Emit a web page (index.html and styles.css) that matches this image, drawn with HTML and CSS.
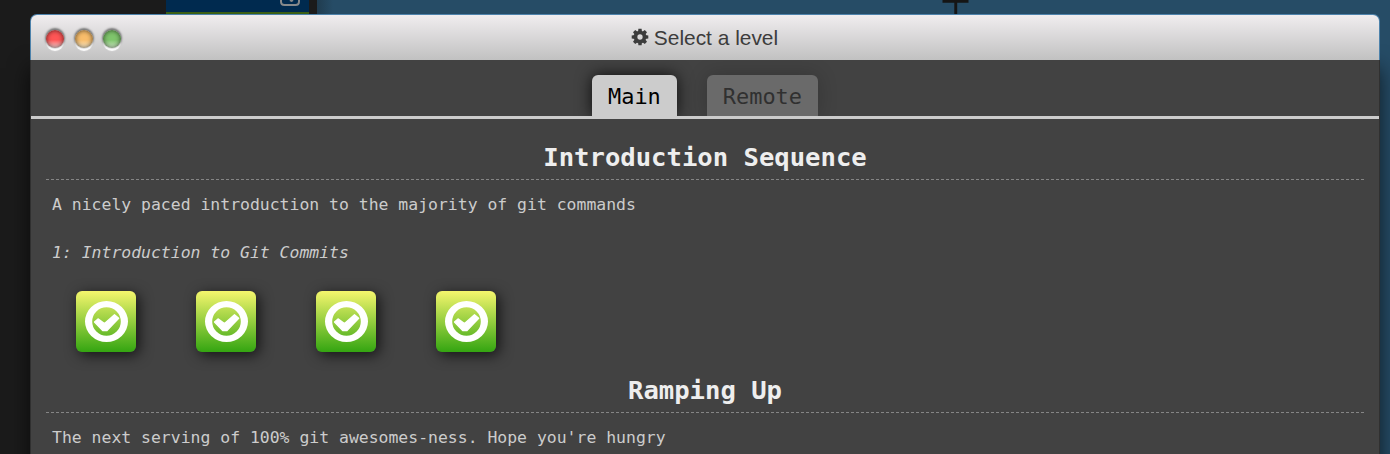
FILE: index.html
```html
<!DOCTYPE html>
<html lang="en">
<head>
<meta charset="utf-8">
<title>Select a level</title>
<link rel="stylesheet" href="styles.css">
</head>
<body>
<div class="backdrop">
  <div class="sidebar"><div class="terminal"><svg class="terminal-icon" width="22" height="8" viewBox="0 0 22 8"><path d="M2 0V1.500Q2 5 5.500 5H16.500Q20 5 20 1.500V0M11 0L12.500 .8L14 0" fill="none" stroke="#87898b" stroke-width="2"/></svg></div></div>
  <div class="canvas"><svg class="commit" width="28" height="14" viewBox="0 0 28 14"><path d="M.5 0H26.500V2.700H.5ZM12.300 2.500H15.200V14H12.300Z" fill="#151515"/></svg></div>
</div>
<main class="window">
  <header class="titlebar">
    <div class="lights"><i class="light red"></i><i class="light amber"></i><i class="light green"></i></div>
    <h1 class="title"><svg class="gear" width="18" height="18" viewBox="-9 -9 18 18"><g fill="#3c3c3c"><path id="tooth" d="M-2-5H2L1.600-8.300H-1.600Z"/><use href="#tooth" transform="rotate(45)"/><use href="#tooth" transform="rotate(90)"/><use href="#tooth" transform="rotate(135)"/><use href="#tooth" transform="rotate(180)"/><use href="#tooth" transform="rotate(225)"/><use href="#tooth" transform="rotate(270)"/><use href="#tooth" transform="rotate(315)"/></g><circle r="4.500" fill="none" stroke="#3c3c3c" stroke-width="3.700"/></svg><span>Select a level</span></h1>
  </header>
  <div class="content">
    <nav class="tabs"><div class="tab active">Main</div><div class="tab">Remote</div></nav>
    <section class="sequence">
      <h2>Introduction Sequence</h2>
      <p>A nicely paced introduction to the majority of git commands</p>
      <p class="level-name">1: Introduction to Git Commits</p>
      <div class="levels">
        <div class="level"><svg viewBox="0 0 60 61"><path id="ring" fill="#fff" fill-rule="evenodd" d="M9 30.500a21.500 20.500 0 1 0 43 0a21.500 20.500 0 1 0-43 0ZM16.200 30.500a14.300 14.300 0 1 1 28.600 0a14.300 14.300 0 1 1-28.600 0Z"/><path id="tick" d="M18.500 31L22 27.900L28.500 32.600L38.500 23.700L42.700 27.300L31 39.500H26.700Z" fill="#fff" stroke="#fff" stroke-width="1.300" stroke-linejoin="round"/></svg></div>
        <div class="level"><svg viewBox="0 0 60 61"><use href="#ring"/><use href="#tick"/></svg></div>
        <div class="level"><svg viewBox="0 0 60 61"><use href="#ring"/><use href="#tick"/></svg></div>
        <div class="level"><svg viewBox="0 0 60 61"><use href="#ring"/><use href="#tick"/></svg></div>
      </div>
    </section>
    <section class="sequence">
      <h2>Ramping Up</h2>
      <p>The next serving of 100% git awesomes-ness. Hope you're hungry</p>
    </section>
  </div>
</main>
</body>
</html>
```
FILE: styles.css
```css
* { box-sizing: border-box; }
html, body { margin: 0; height: 454px; overflow: hidden; }
body { position: relative; background: #264c66; }
.backdrop { display: flex; height: 454px; }
.sidebar { width: 317px; background: #1b1b1b; padding-left: 166px; }
.terminal { display: flex; justify-content: flex-end; width: 143px; height: 14px; background: #002a4f; border-bottom: 2px solid #3b6014; padding-right: 8px; }
.canvas { flex: 1; background: linear-gradient(90deg, #203c4f, #264c66 16px); padding-left: 625px; }
.commit, .terminal-icon { display: block; }
.window { position: absolute; left: 30px; top: 14px; width: 1350px; height: 460px; }
.titlebar { display: flex; position: relative; z-index: 2; height: 46px; border: 1px solid #4d82ab; border-bottom: 0; border-radius: 7px 7px 0 0; background: linear-gradient(#f0edef, #c1c1c1); }
.lights { display: flex; gap: 10.700px; width: 120px; padding: 15px 0 0 15px; }
.light { width: 18px; height: 18px; border-radius: 50%; box-shadow: 0 -1px 2px 1px #777, 0 3px 1px #fff, inset 0 0 5px rgba(0, 0, 0, .65); }
.red { background: linear-gradient(#ff5656 55%, #ffdada); }
.amber { background: linear-gradient(#f8bd6b 55%, #fff0d0); }
.green { background: linear-gradient(#7fc56c 55%, #d8f3cf); }
.title { display: flex; flex: 1; justify-content: center; gap: 5px; margin: 0; padding: 10px 121px 0 0; color: #3c3c3c; font: 400 20.900px/26px "Liberation Sans", sans-serif; }
.gear { margin-top: 3px; }
.content { height: 414px; border: solid #303030; border-width: 0 1px; background: #424242; box-shadow: 0 8px 20px rgba(0, 0, 0, .65); color: #ccc; font: 16.440px/24px "DejaVu Sans Mono", monospace; }
.tabs { display: flex; justify-content: center; gap: 30px; height: 59px; padding-top: 15px; border-bottom: 3px solid #ccc; }
.tab { height: 41px; padding: 0 16px; border-radius: 6px 6px 0 0; background: #6a6a6a; color: #303030; font-size: 21.930px; line-height: 43px; clip-path: inset(-20px -20px 0); box-shadow: 0 0 20px rgba(0, 0, 0, .2); }
.active { background: #ccc; color: #000; box-shadow: 0 0 16px rgba(0, 0, 0, .8); }
.sequence { padding: 0 15px; }
h2 { height: 61px; margin: 0; border-bottom: 1px dashed #858585; color: #eee; text-align: center; font-size: 25.580px; line-height: 76px; }
.sequence + .sequence h2 { height: 51px; line-height: 56px; }
p { margin: 13px 6px 0; white-space: pre; }
.level-name { margin-top: 24px; font-style: italic; }
.levels { display: flex; gap: 60px; padding: 26px 30px 10px; }
.level { width: 60px; height: 61px; border-radius: 6px; background: linear-gradient(#f5f66d, #34a511); box-shadow: 3px 3px 14px rgba(0, 0, 0, .7); }
.level svg { display: block; }
```
